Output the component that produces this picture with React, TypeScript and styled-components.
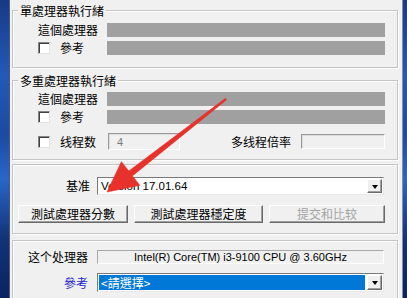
import React from "react";
import styled, { createGlobalStyle } from "styled-components";

const CJK = `"Noto Sans CJK TC", "Noto Sans CJK SC", sans-serif`;
const LATIN = `"Liberation Sans", Arial, sans-serif`;

const GlobalStyle = createGlobalStyle`
  * { box-sizing: border-box; }
  html, body { margin: 0; padding: 0; background: #f0f0f0; }
  body { width: 407px; height: 298px; overflow: hidden; }
`;

const Screen = styled.div`
  position: relative;
  display: flex;
  width: 407px;
  height: 298px;
  overflow: hidden;
  font-family: ${CJK};
  font-size: 12px;
  color: #000;
`;

const Wallpaper = styled.div<{ $w: number }>`
  flex: 0 0 ${(p) => p.$w}px;
  background: linear-gradient(
    180deg,
    #173a86 0%,
    #2459b8 25%,
    #1d4aa3 45%,
    #2a66c8 60%,
    #123378 80%,
    #0b2260 100%
  );
`;

const Window = styled.div`
  flex: 1;
  display: flex;
  flex-direction: column;
  padding: 3px 4px 0 2px;
  background: #f0f0f0;
  border-left: 1px solid #4a5a78;
  border-right: 1px solid #8e8e8e;
`;

const Group = styled.fieldset<{ $mt: number }>`
  margin: ${(p) => p.$mt}px 0 0;
  padding: 0;
  min-width: 0;
  border: 1px solid #c4c4c4;
  box-shadow: inset 1px 1px 0 #fff, 1px 1px 0 #fff;
  flex-shrink: 0;
`;

const Legend = styled.legend`
  margin-left: 5px;
  padding: 0 2px;
  font-size: 12px;
  line-height: 15px;
`;

const Body = styled.div<{ $pad: string }>`
  display: flex;
  flex-direction: column;
  padding: ${(p) => p.$pad};
`;

const Row = styled.div<{ $h: number; $mt?: number }>`
  display: flex;
  align-items: center;
  height: ${(p) => p.$h}px;
  margin-top: ${(p) => p.$mt ?? 0}px;
  flex-shrink: 0;
`;

const LabelCell = styled.div<{ $w: number; $right?: boolean; $pr?: number }>`
  flex: 0 0 ${(p) => p.$w}px;
  display: flex;
  align-items: center;
  justify-content: ${(p) => (p.$right ? "flex-end" : "flex-start")};
  padding-right: ${(p) => p.$pr ?? 0}px;
  line-height: 14px;
  white-space: nowrap;
`;

const Text = styled.span<{ $blue?: boolean }>`
  color: ${(p) => (p.$blue ? "#1f1fd1" : "#000")};
  line-height: 14px;
  white-space: nowrap;
`;

const Bar = styled.div`
  flex: 1;
  height: 100%;
  background: #a0a0a0;
`;

const CheckBox = styled.span`
  flex: 0 0 12px;
  width: 12px;
  height: 12px;
  margin-right: 10px;
  background: #fff;
  border: 1px solid;
  border-color: #848484 #e3e3e3 #e3e3e3 #848484;
  box-shadow: inset 1px 1px 0 #404040;
`;

const NumField = styled.div<{ $w: number; $h: number }>`
  flex: 0 0 ${(p) => p.$w}px;
  height: ${(p) => p.$h}px;
  padding-left: 8px;
  display: flex;
  align-items: center;
  font: 11px ${LATIN};
  color: #7a7a7a;
  background: #f0f0f0;
  border: 1px solid;
  border-color: #9a9a9a #fff #fff #9a9a9a;
  box-shadow: inset 1px 1px 0 #dcdcdc;
`;

const Spacer = styled.div`
  flex: 1;
`;

const Combo = styled.div<{ $h: number }>`
  flex: 1;
  height: ${(p) => p.$h}px;
  margin-right: 1px;
  display: flex;
  align-items: stretch;
  padding: 1px;
  background: #fff;
  border: 1px solid;
  border-color: #7a7a7a #e8e8e8 #e8e8e8 #7a7a7a;
`;

const ComboValue = styled.div<{ $selected?: boolean }>`
  flex: 1;
  display: flex;
  align-items: center;
  padding-left: 2px;
  white-space: nowrap;
  overflow: hidden;
  background: ${(p) => (p.$selected ? "#0078d7" : "#fff")};
  color: ${(p) => (p.$selected ? "#fff" : "#000")};
  font-family: ${(p) => (p.$selected ? CJK : LATIN)};
  font-size: ${(p) => (p.$selected ? "12px" : "11.5px")};
  line-height: 14px;
`;

const DropButton = styled.span`
  flex: 0 0 15px;
  margin-left: 2px;
  display: flex;
  align-items: center;
  justify-content: center;
  background: #f0f0f0;
  border: 1px solid;
  border-color: #fff #696969 #696969 #fff;
  box-shadow: inset -1px -1px 0 #a0a0a0;

  &::after {
    content: "";
    border-left: 3.5px solid transparent;
    border-right: 3.5px solid transparent;
    border-top: 4px solid #000;
    margin-top: 1px;
  }
`;

const Buttons = styled.div`
  display: flex;
  gap: 6px;
  margin-top: 10px;
  height: 18px;
`;

const Button = styled.button<{ $w: number }>`
  flex: 0 0 ${(p) => p.$w}px;
  height: 18px;
  padding: 0;
  font-family: ${CJK};
  font-size: 12px;
  line-height: 14px;
  color: #000;
  background: #f0f0f0;
  border: 1px solid;
  border-color: #fff #696969 #696969 #fff;
  box-shadow: inset -1px -1px 0 #a0a0a0;

  &:disabled {
    color: #a3a3a3;
  }
`;

const InfoBox = styled.div`
  flex: 1;
  height: 14px;
  margin-right: 1px;
  display: flex;
  align-items: center;
  justify-content: center;
  font: 11px ${LATIN};
  background: #f0f0f0;
  border: 1px solid;
  border-color: #a8a8a8 #fff #fff #a8a8a8;
  white-space: nowrap;
`;

const ArrowLayer = styled.svg`
  position: absolute;
  left: 0;
  top: 0;
  pointer-events: none;
`;

const BenchmarkArrow: React.FC = () => (
  <ArrowLayer width={407} height={298} viewBox="0 0 407 298">
    <polygon
      points="107,192 121.4,161.7 128.8,171.1 225.4,98.3 226.6,99.7 132.4,175.9 139.8,185.3"
      fill="#e6322b"
      stroke="#e6322b"
      strokeWidth={0.6}
      strokeLinejoin="round"
    />
  </ArrowLayer>
);

const App: React.FC = () => {
  return (
    <>
      <GlobalStyle />
      <Screen>
        <Wallpaper $w={9} />
        <Window>
          <Group $mt={0}>
            <Legend>單處理器執行緒</Legend>
            <Body $pad="5px 12px 12px 25px">
              <Row $h={14}>
                <LabelCell $w={69}>這個處理器</LabelCell>
                <Bar />
              </Row>
              <Row $h={14} $mt={4}>
                <LabelCell $w={69}>
                  <CheckBox />
                  <Text>參考</Text>
                </LabelCell>
                <Bar />
              </Row>
            </Body>
          </Group>

          <Group $mt={5}>
            <Legend>多重處理器執行緒</Legend>
            <Body $pad="4px 12px 9px 25px">
              <Row $h={14}>
                <LabelCell $w={69}>這個處理器</LabelCell>
                <Bar />
              </Row>
              <Row $h={14} $mt={4}>
                <LabelCell $w={69}>
                  <CheckBox />
                  <Text>參考</Text>
                </LabelCell>
                <Bar />
              </Row>
              <Row $h={17} $mt={9}>
                <LabelCell $w={70}>
                  <CheckBox />
                  <Text>线程数</Text>
                </LabelCell>
                <NumField $w={72} $h={17}>
                  4
                </NumField>
                <Spacer />
                <LabelCell $w={68} $pr={10}>
                  多线程倍率
                </LabelCell>
                <NumField $w={84} $h={15} />
              </Row>
            </Body>
          </Group>

          <Group $mt={4}>
            <Body $pad="12px 12px 10px 5px">
              <Row $h={18}>
                <LabelCell $w={79} $right $pr={7}>
                  基准
                </LabelCell>
                <Combo $h={18}>
                  <ComboValue>Version 17.01.64</ComboValue>
                  <DropButton />
                </Combo>
              </Row>
              <Buttons>
                <Button $w={110}>測試處理器分數</Button>
                <Button $w={129}>測試處理器穩定度</Button>
                <Button $w={116} disabled>
                  提交和比较
                </Button>
              </Buttons>
            </Body>
          </Group>

          <Group $mt={6}>
            <Body $pad="9px 12px 10px 5px">
              <Row $h={14}>
                <LabelCell $w={79} $right $pr={9}>
                  这个处理器
                </LabelCell>
                <InfoBox>Intel(R) Core(TM) i3-9100 CPU @ 3.60GHz</InfoBox>
              </Row>
              <Row $h={19} $mt={9}>
                <LabelCell $w={79} $right $pr={9}>
                  <Text $blue>參考</Text>
                </LabelCell>
                <Combo $h={19}>
                  <ComboValue $selected>&lt;請選擇&gt;</ComboValue>
                  <DropButton />
                </Combo>
              </Row>
            </Body>
          </Group>
        </Window>
        <Wallpaper $w={4} />
        <BenchmarkArrow />
      </Screen>
    </>
  );
};

export default App;
